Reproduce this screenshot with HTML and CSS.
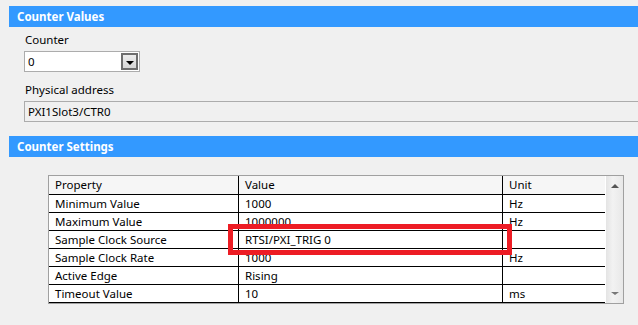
FILE: index.html
```html
<!DOCTYPE html>
<html lang="en">
<head>
    <meta charset="UTF-8">
    <title>Counter Values</title>
    <link rel="stylesheet" href="styles.css">
</head>
<body>

<div class="section-head">Counter Values</div>
<div class="values">
    <div class="caption">Counter</div>
    <div class="combo">
        <span class="combo-text">0</span>
        <span class="combo-btn"><span class="arrow"></span></span>
    </div>
    <div class="caption caption-addr">Physical address</div>
    <div class="field">PXI1Slot3/CTR0</div>
</div>

<div class="section-head">Counter Settings</div>
<div class="settings">
    <div class="grid-box">
        <div class="grid">
            <div class="row head">
                <div class="cell">Property</div>
                <div class="cell">Value</div>
                <div class="cell">Unit</div>
            </div>
            <div class="row">
                <div class="cell">Minimum Value</div>
                <div class="cell">1000</div>
                <div class="cell">Hz</div>
            </div>
            <div class="row">
                <div class="cell">Maximum Value</div>
                <div class="cell">1000000</div>
                <div class="cell">Hz</div>
            </div>
            <div class="row">
                <div class="cell">Sample Clock Source</div>
                <div class="cell">RTSI/PXI_TRIG 0</div>
                <div class="cell"></div>
            </div>
            <div class="row">
                <div class="cell">Sample Clock Rate</div>
                <div class="cell">1000</div>
                <div class="cell">Hz</div>
            </div>
            <div class="row">
                <div class="cell">Active Edge</div>
                <div class="cell">Rising</div>
                <div class="cell"></div>
            </div>
            <div class="row">
                <div class="cell">Timeout Value</div>
                <div class="cell">10</div>
                <div class="cell">ms</div>
            </div>
        </div>
        <div class="scrollbar">
            <span class="sb-up"></span>
            <span class="sb-down"></span>
        </div>
        <!-- annotation box drawn over the grid -->
        <div class="highlight"></div>
    </div>
</div>

</body>
</html>
```

FILE: styles.css
```css
body {
    margin: 0;
    background: #f0f0f0;
    font-family: "Noto Sans", "Open Sans", sans-serif;
    font-size: 11.5px;
    color: #000;
    width: 638px;
    height: 325px;
    overflow: hidden;
}

.section-head {
    margin-left: 9px;
    height: 21px;
    line-height: 21px;
    padding-left: 8px;
    background: #3399ff;
    color: #fff;
    font-weight: bold;
}

body > .section-head:first-child {
    margin-top: 6px;
}

.values {
    padding: 4px 0 14px 24px;
}

.caption {
    height: 17px;
    line-height: 17px;
    padding-left: 1px;
    margin-bottom: 3px;
}

.caption-addr {
    margin-top: 9px;
}

.combo {
    width: 114px;
    height: 19px;
    border: 1px solid #acacac;
    background: #fff;
    display: flex;
    align-items: center;
    justify-content: space-between;
}

.combo-text {
    padding-left: 3px;
}

.combo-btn {
    width: 13px;
    height: 13px;
    margin-right: 1px;
    border: 2px solid #6d6d6d;
    background: linear-gradient(#ececec, #d6d6d6);
    display: flex;
    align-items: center;
    justify-content: center;
}

.arrow {
    width: 0;
    height: 0;
    border-left: 4px solid transparent;
    border-right: 4px solid transparent;
    border-top: 4px solid #000;
    margin-top: 2px;
}

.field {
    height: 19px;
    line-height: 19px;
    border: 1px solid #acacac;
    border-right: none;
    padding-left: 3px;
}

.settings {
    padding: 18px 14px 0 48px;
}

.grid-box {
    position: relative;
    width: 574px;
    height: 127px;
    border: 1px solid #a0a0a0;
    background: #fff;
    display: flex;
}

.grid {
    width: 556px;
}

.row {
    display: grid;
    grid-template-columns: 190px 264px 102px;
    height: 17px;
    border-bottom: 1px solid #000;
}

.row.head {
    height: 18px;
    background: #f6f6f6;
}

.cell {
    line-height: 17px;
    padding-left: 6px;
    white-space: nowrap;
    overflow: hidden;
}

.cell:not(:last-child) {
    border-right: 1px solid #000;
}

.scrollbar {
    width: 17px;
    margin-left: 1px;
    background: linear-gradient(90deg, #e4e4e4, #f2f2f2 40%, #e8e8e8);
    display: flex;
    flex-direction: column;
    justify-content: space-between;
    align-items: center;
    padding: 8px 0 8px;
}

.sb-up {
    border-left: 4px solid transparent;
    border-right: 4px solid transparent;
    border-bottom: 4px solid #555;
}

.sb-down {
    border-left: 4px solid transparent;
    border-right: 4px solid transparent;
    border-top: 3px solid #777;
}

.highlight {
    position: absolute;
    left: 179px;
    top: 48px;
    width: 274px;
    height: 21px;
    border: 5px solid #ed1c24;
}
```
